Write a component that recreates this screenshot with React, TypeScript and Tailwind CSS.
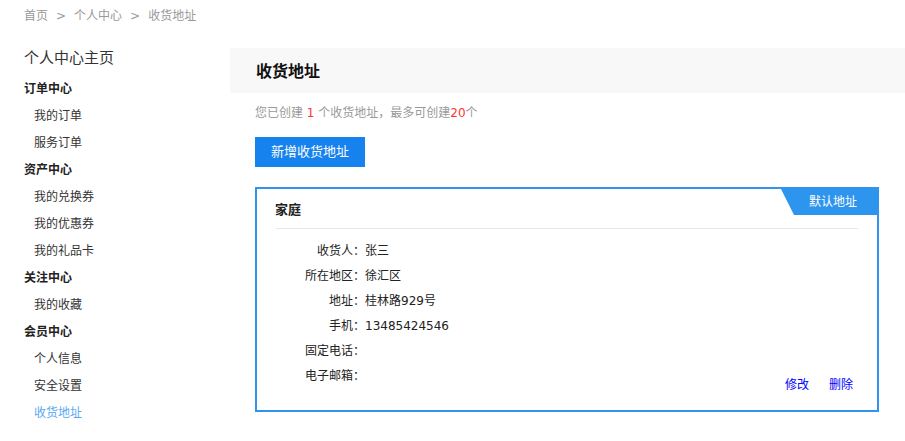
import React from 'react';

type NavGroup = { title: string; items: string[] };

const groups: NavGroup[] = [
  { title: '订单中心', items: ['我的订单', '服务订单'] },
  { title: '资产中心', items: ['我的兑换券', '我的优惠券', '我的礼品卡'] },
  { title: '关注中心', items: ['我的收藏'] },
  { title: '会员中心', items: ['个人信息', '安全设置', '收货地址'] },
];

const rows: [string, string][] = [
  ['收货人：', '张三'],
  ['所在地区：', '徐汇区'],
  ['地址：', '桂林路929号'],
  ['手机：', '13485424546'],
  ['固定电话：', ''],
  ['电子邮箱：', ''],
];

const App: React.FC = () => {
  return (
    <div className="w-[905px] h-[441px] overflow-hidden bg-white text-[#333] font-['DejaVu_Sans','Noto_Sans_CJK_SC',sans-serif]">
      {/* breadcrumb */}
      <div className="h-[32px] pl-[24px] flex items-center text-[12px] text-[#999]">
        <span>首页</span>
        <span className="mx-[8px]">&gt;</span>
        <span>个人中心</span>
        <span className="mx-[8px]">&gt;</span>
        <span>收货地址</span>
      </div>

      <div className="flex mt-[16px]">
        {/* sidebar */}
        <div className="w-[230px] shrink-0 pl-[24px]">
          <div className="text-[15px] leading-[20px] mb-[8px] text-[#333]">个人中心主页</div>
          {groups.map(g => (
            <div key={g.title}>
              <div className="text-[12px] leading-[27px] font-bold text-[#222]">{g.title}</div>
              {g.items.map(it => (
                <div
                  key={it}
                  className={
                    it === '收货地址'
                      ? 'pl-[10px] text-[12px] leading-[27px] text-[#5aa9ef]'
                      : 'pl-[10px] text-[12px] leading-[27px] text-[#333]'
                  }
                >
                  {it}
                </div>
              ))}
            </div>
          ))}
        </div>

        {/* main */}
        <div className="flex-1">
          <div className="h-[45px] bg-[#f8f8f8] pl-[26px] pt-[14px]">
            <div className="text-[16px] leading-[20px] font-bold text-[#111]">收货地址</div>
          </div>
          <div className="pl-[25px] pr-[26px]">
            <div className="mt-[10px] text-[12px] leading-[20px] text-[#999]">
              您已创建 <span className="text-[#f33]">1</span> 个收货地址，最多可创建<span className="text-[#f33]">20</span>个
            </div>
            <button className="mt-[14px] w-[110px] h-[30px] bg-[#1682ee] text-white text-[13px]">新增收货地址</button>

            <div className="relative mt-[20px] w-[624px] h-[225px] border-2 border-[#2e94ee]">
              <div className="absolute top-0 right-0 w-[96px] h-[26px] bg-[#2d95ee] [clip-path:polygon(0_0,100%_0,100%_100%,13px_100%)] flex items-center justify-end pr-[20px] text-[12px] text-white">
                默认地址
              </div>
              <div className="mx-[19px] pt-[11px] pb-[8px] border-b border-[#e8e8e8]">
                <div className="text-[13px] leading-[20px] font-bold text-[#222] -ml-[1px]">家庭</div>
              </div>
              <div className="flex items-end justify-between pl-[19px] pr-[24px] mt-[10px]">
                <div>
                  {rows.map(([k, v]) => (
                    <div key={k} className="flex text-[12px] leading-[25px]">
                      <div className="w-[89px] text-right text-[#222]">{k}</div>
                      <div className="text-[#222]">{v}</div>
                    </div>
                  ))}
                </div>
                <div className="flex gap-[20px] text-[12px] leading-[18px] text-[#00f] -mb-[5px]">
                  <span>修改</span>
                  <span>删除</span>
                </div>
              </div>
            </div>
          </div>
        </div>
      </div>
    </div>
  );
};

export default App;
